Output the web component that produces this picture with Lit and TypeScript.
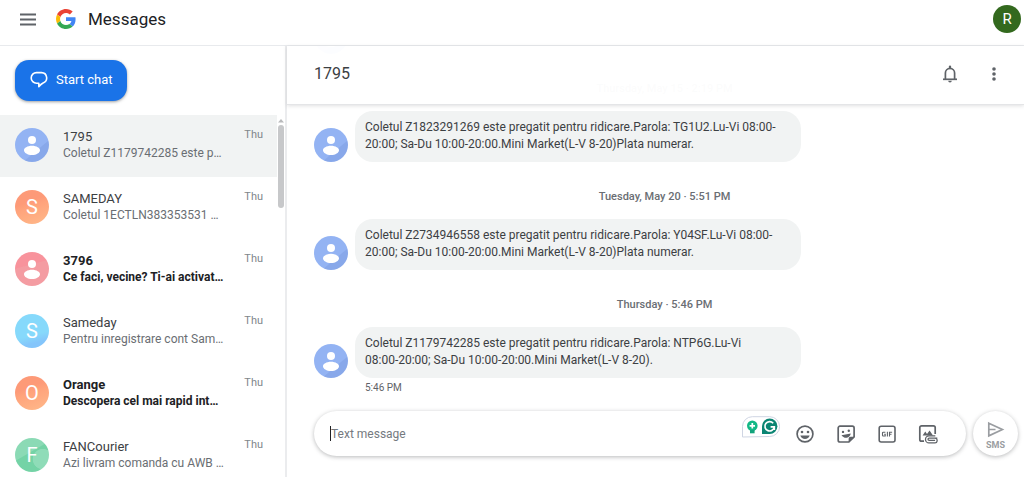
import { LitElement, html, css, svg, nothing } from "lit";
import { customElement, property } from "lit/decorators.js";

interface Chat {
  name: string;
  preview: string;
  tone: string;
  letter?: string;
  unread?: boolean;
  active?: boolean;
}

interface Message {
  stamp: string;
  text: string;
}

const CHATS: Chat[] = [
  { name: "1795", preview: "Coletul Z1179742285 este p…", tone: "blue", active: true },
  { name: "SAMEDAY", preview: "Coletul 1ECTLN383353531 …", tone: "orange", letter: "S" },
  { name: "3796", preview: "Ce faci, vecine? Ti-ai activat…", tone: "pink", unread: true },
  { name: "Sameday", preview: "Pentru inregistrare cont Sam…", tone: "cyan", letter: "S" },
  { name: "Orange", preview: "Descopera cel mai rapid int…", tone: "orange", letter: "O", unread: true },
  { name: "FANCourier", preview: "Azi livram comanda cu AWB …", tone: "green", letter: "F" },
];

const MESSAGES: Message[] = [
  {
    stamp: "Thursday, May 15 · 2:19 PM",
    text: "Coletul Z1823291269 este pregatit pentru ridicare.Parola: TG1U2.Lu-Vi 08:00-20:00; Sa-Du 10:00-20:00.Mini Market(L-V 8-20)Plata numerar.",
  },
  {
    stamp: "Tuesday, May 20 · 5:51 PM",
    text: "Coletul Z2734946558 este pregatit pentru ridicare.Parola: Y04SF.Lu-Vi 08:00-20:00; Sa-Du 10:00-20:00.Mini Market(L-V 8-20)Plata numerar.",
  },
  {
    stamp: "Thursday · 5:46 PM",
    text: "Coletul Z1179742285 este pregatit pentru ridicare.Parola: NTP6G.Lu-Vi\n08:00-20:00; Sa-Du 10:00-20:00.Mini Market(L-V 8-20).",
  },
];

@customElement("contact-avatar")
export class ContactAvatar extends LitElement {
  @property() tone = "blue";
  @property() letter = "";

  static styles = css`
    :host {
      display: block;
      flex: none;
      width: 34px;
      height: 34px;
    }
    .disc {
      display: grid;
      place-items: center;
      height: 100%;
      border-radius: 50%;
      overflow: hidden;
      color: #fff;
      font: 20px/34px Roboto, sans-serif;
    }
    .blue {
      background: linear-gradient(140deg, #93b3f3 0 64%, #88a8ea 66%);
    }
    .orange {
      background: linear-gradient(160deg, #fd9a78 0 35%, #ffa47c 50%, #ffb587 90%);
    }
    .pink {
      background: linear-gradient(165deg, #f8939c 0 38%, #f49ca2 40%);
    }
    .cyan {
      background: linear-gradient(165deg, #86d9fb 0 60%, #84c5fb 80%);
    }
    .green {
      background: radial-gradient(circle at 82% 62%, #8fdcb8 0 28%, transparent 30%),
        linear-gradient(150deg, #8bdab5 0 42%, #74d3a6 44%);
    }
    svg {
      display: block;
      width: 34px;
      height: 34px;
    }
  `;

  render() {
    return html`<div class="disc ${this.tone}">
      ${this.letter
        ? this.letter
        : html`<svg viewBox="0 0 34 34" fill="#fff" aria-hidden="true">
            <circle cx="17" cy="12" r="4" />
            <path d="M17 17.8c4.6 0 8 2.200 8 4.400 0 2.600-3.600 4.800-8 4.800s-8-2.200-8-4.800c0-2.200 3.400-4.400 8-4.400z" />
          </svg>`}
    </div>`;
  }
}

const menuIcon = svg`<path d="M0 1.500h16M0 6.500h16M0 11.500h16" stroke="#5f6368" stroke-width="2"/>`;

@customElement("app-root")
export class AppRoot extends LitElement {
  static styles = css`
    :host {
      display: grid;
      grid-template-rows: 45px minmax(0, 1fr);
      height: 100vh;
      background: #fff;
      color: #202124;
      font-family: Roboto, sans-serif;
      font-size: 12px;
    }
    * {
      box-sizing: border-box;
    }
    button {
      border: 0;
      padding: 0;
      background: none;
      font: inherit;
      color: inherit;
      cursor: pointer;
    }
    svg {
      display: block;
      flex: none;
    }
    h1,
    h2,
    p,
    ul {
      margin: 0;
      padding: 0;
      font-weight: 400;
    }
    .topbar {
      display: flex;
      align-items: center;
      padding: 0 3px 7px 20px;
    }
    .logo {
      margin: 0 12px 0 20px;
    }
    .brand {
      flex: 1;
      font-size: 17px;
      line-height: 24px;
    }
    .account {
      width: 28px;
      height: 28px;
      border-radius: 50%;
      background: #33691e;
      color: #fff;
      font-size: 15px;
    }
    .body {
      display: grid;
      grid-template-columns: 287px minmax(0, 1fr);
      border-top: 1px solid #e8eaed;
      min-height: 0;
    }
    .side {
      display: flex;
      flex-direction: column;
      min-height: 0;
      border-right: 2px solid #ebecee;
    }
    .start {
      display: flex;
      align-items: center;
      align-self: flex-start;
      gap: 8px;
      height: 41px;
      margin: 14px 0 14px 15px;
      padding: 0 14px 2px 15px;
      border-radius: 14px;
      background: #1a73e8;
      color: #fff;
      font-size: 13px;
      box-shadow: 0 1px 3px rgba(60, 64, 67, 0.5);
    }
    .list-wrap {
      display: flex;
      flex: 1;
      min-height: 0;
      overflow: hidden;
    }
    .list {
      flex: 1;
      min-width: 0;
      list-style: none;
    }
    .chat {
      display: flex;
      gap: 14px;
      height: 62px;
      padding: 13px 14px 0 15px;
      color: inherit;
      text-decoration: none;
    }
    .chat.active {
      background: #f1f3f3;
    }
    .info {
      flex: 1;
      min-width: 0;
      line-height: 17px;
    }
    .name {
      font-size: 13px;
      color: #3c4043;
    }
    .preview {
      font-size: 12px;
      color: #6a6e73;
      white-space: nowrap;
    }
    .unread .name,
    .unread .preview {
      font-weight: 700;
      color: #202124;
    }
    .when {
      font-size: 11px;
      line-height: 14px;
      color: #80868b;
    }
    .rail {
      display: flex;
      flex-direction: column;
      align-items: center;
      width: 8px;
      padding-top: 4px;
    }
    .thumb {
      width: 6px;
      height: 83px;
      margin: 2px 0 auto;
      border-radius: 3px;
      background: #c7c8ca;
    }
    .pane {
      position: relative;
      display: flex;
      flex-direction: column;
      min-width: 0;
      min-height: 0;
    }
    .pane-head {
      position: absolute;
      inset: 0 0 auto;
      display: flex;
      align-items: center;
      gap: 28px;
      height: 59px;
      padding: 0 22px 2px 27px;
      background: rgba(255, 255, 255, 0.975);
      border-bottom: 1px solid #e4e5e7;
      box-shadow: 0 1px 4px rgba(60, 64, 67, 0.16);
    }
    .title {
      flex: 1;
      font-size: 16px;
      line-height: 24px;
      color: #3c4043;
    }
    .thread {
      display: flex;
      flex: 1;
      flex-direction: column;
      justify-content: flex-end;
      min-height: 0;
      overflow: hidden;
      padding: 0 9px 16px 27px;
    }
    .stamp {
      flex: none;
      line-height: 14px;
      margin: 28px 0 15px;
      text-align: center;
      font-size: 11px;
      font-weight: 500;
      color: #6a6e73;
    }
    .row {
      display: flex;
      flex: none;
      align-items: flex-end;
      gap: 7px;
    }
    .bubble {
      width: 446px;
      max-width: 80%;
      padding: 8px 10px 9px;
      border-radius: 18px;
      background: #f1f3f3;
      color: #3c4043;
      font-size: 12px;
      line-height: 17px;
      white-space: pre-line;
    }
    .time {
      padding: 3px 0 0 51px;
      font-size: 10px;
      line-height: 14px;
      color: #5f6368;
    }
    .compose {
      display: flex;
      gap: 7px;
      padding: 0 6px 21px 27px;
    }
    .field {
      display: flex;
      flex: 1;
      align-items: center;
      height: 45px;
      min-width: 0;
      padding: 0 28px 0 16px;
      border-radius: 23px;
      box-shadow: 0 1px 4px rgba(60, 64, 67, 0.36);
    }
    .caret {
      width: 1px;
      height: 15px;
      background: #202124;
    }
    .text {
      flex: 1;
      min-width: 0;
      padding: 0;
      border: 0;
      outline: 0;
      background: none;
      font: 12px/18px Roboto, sans-serif;
      color: #202124;
    }
    .text::placeholder {
      color: #757a7f;
      opacity: 1;
    }
    .helper {
      align-self: flex-start;
      margin: 5px 15px 0 0;
    }
    .tools {
      display: flex;
      gap: 21px;
    }
    .send {
      display: flex;
      flex-direction: column;
      align-items: center;
      width: 45px;
      height: 45px;
      padding-top: 10px;
      border-radius: 50%;
      color: #9a9da1;
      font-size: 9px;
      font-weight: 700;
      line-height: 14px;
      box-shadow: 0 1px 4px rgba(60, 64, 67, 0.36);
    }
  `;

  private renderChat(chat: Chat) {
    return html`<li>
      <a href="#" class="chat ${chat.active ? "active" : ""} ${chat.unread ? "unread" : ""}">
        <contact-avatar .tone=${chat.tone} .letter=${chat.letter ?? ""}></contact-avatar>
        <div class="info">
          <div class="name">${chat.name}</div>
          <div class="preview">${chat.preview}</div>
        </div>
        <span class="when">Thu</span>
      </a>
    </li>`;
  }

  private renderMessage(message: Message, last: boolean) {
    return html`<div class="stamp">${message.stamp}</div>
      <div class="row">
        <contact-avatar></contact-avatar>
        <p class="bubble">${message.text}</p>
      </div>
      ${last ? html`<div class="time">5:46 PM</div>` : nothing}`;
  }

  render() {
    return html`
      <header class="topbar">
        <button aria-label="Menu">
          <svg width="16" height="13" viewBox="0 0 16 13">${menuIcon}</svg>
        </button>
        <svg class="logo" width="20" height="20" viewBox="0 0 48 48" aria-hidden="true">
          <path fill="#ea4335" d="M24 9.500c3.540 0 6.710 1.220 9.210 3.600l6.850-6.850C35.900 2.380 30.470 0 24 0 14.620 0 6.510 5.380 2.560 13.220l7.980 6.190C12.430 13.720 17.740 9.500 24 9.500z" />
          <path fill="#4285f4" d="M46.980 24.550c0-1.570-.15-3.090-.38-4.550H24v9.020h12.940c-.58 2.960-2.260 5.480-4.780 7.180l7.730 6c4.510-4.180 7.090-10.360 7.090-17.650z" />
          <path fill="#fbbc05" d="M10.530 28.590c-.48-1.450-.76-2.990-.76-4.590s.27-3.140.76-4.590l-7.980-6.190C.92 16.460 0 20.120 0 24c0 3.880.92 7.540 2.560 10.780l7.970-6.190z" />
          <path fill="#34a853" d="M24 48c6.480 0 11.930-2.130 15.890-5.810l-7.730-6c-2.150 1.450-4.920 2.300-8.160 2.300-6.260 0-11.570-4.220-13.470-9.910l-7.980 6.190C6.510 42.620 14.620 48 24 48z" />
        </svg>
        <h1 class="brand">Messages</h1>
        <button class="account" aria-label="Account">R</button>
      </header>
      <div class="body">
        <aside class="side">
          <button class="start">
            <svg width="18" height="17" viewBox="0 0 18 17" fill="none" stroke="#fff" stroke-width="1.600" stroke-linejoin="round" aria-hidden="true">
              <path d="M8.800 12.200H6.500a5.300 5.300 0 0 1 0-10.600h5a5.300 5.300 0 0 1 1.600 10.300Q11.500 12.600 8.800 15.600z" />
            </svg>
            Start chat
          </button>
          <div class="list-wrap">
            <ul class="list">
              ${CHATS.map((chat) => this.renderChat(chat))}
            </ul>
            <div class="rail" aria-hidden="true">
              <svg width="6" height="4" viewBox="0 0 6 4"><path d="M3 0l3 3.500H0z" fill="#b9babc" /></svg>
              <div class="thumb"></div>
            </div>
          </div>
        </aside>
        <main class="pane">
          <div class="thread">
            <div class="row"><contact-avatar></contact-avatar></div>
            ${MESSAGES.map((m, i) => this.renderMessage(m, i === MESSAGES.length - 1))}
          </div>
          <div class="pane-head">
            <h2 class="title">1795</h2>
            <button aria-label="Notifications">
              <svg width="16" height="18" viewBox="0 0 16 18" fill="none" stroke="#5f6368" stroke-width="1.700">
                <path d="M1 14.300h14" />
                <path d="M3.400 14V8a4.600 4.600 0 0 1 9.200 0v6" />
                <path d="M8 1.600v1.600" stroke-width="2.200" stroke-linecap="round" />
                <path d="M6.200 15.700h3.600a1.800 1.800 0 0 1-3.600 0z" fill="#5f6368" stroke="none" />
              </svg>
            </button>
            <button aria-label="More options">
              <svg width="16" height="16" viewBox="0 0 16 16" fill="#5f6368">
                <circle cx="8" cy="3" r="1.800" /><circle cx="8" cy="8" r="1.800" /><circle cx="8" cy="13" r="1.800" />
              </svg>
            </button>
          </div>
          <form class="compose" @submit=${(e: Event) => e.preventDefault()}>
            <div class="field">
              <span class="caret"></span>
              <input class="text" type="text" aria-label="Text message" placeholder="Text message" />
              <svg class="helper" width="38" height="22" viewBox="0 0 38 22" aria-hidden="true">
                <path d="M.5 21V10.500a9.800 9.800 0 0 1 9.800-9.800h17.400a9.900 9.900 0 0 1 0 19.800z" fill="#fff" stroke="#cfd5e3" />
                <circle cx="10.300" cy="9.800" r="5.300" fill="#12b886" />
                <path d="M8 14h4.600v3.300H8z" fill="#12a37c" />
                <path d="M7.600 9.800h5.400M10.300 7.100v5.400" stroke="#fff" stroke-width="1.700" />
                <path d="M20 18V10.300a7.700 7.700 0 1 1 7.700 7.700z" fill="#0b8573" />
                <path d="M31.200 7.200A4.700 4.700 0 1 0 32.300 10.800H28.600M32.300 10.800V14" fill="none" stroke="#fff" stroke-width="1.700" />
              </svg>
              <div class="tools">
                <button type="button" aria-label="Emoji">
                  <svg width="20" height="20" viewBox="0 0 20 20" fill="#5f6368">
                    <circle cx="10" cy="10" r="7.900" fill="none" stroke="#5f6368" stroke-width="1.700" />
                    <circle cx="7" cy="8" r="1.300" /><circle cx="13" cy="8" r="1.300" />
                    <path d="M5.300 11.500h9.400c-.7 2.200-2.500 3.500-4.700 3.500s-4-1.300-4.700-3.500z" />
                  </svg>
                </button>
                <button type="button" aria-label="Stickers">
                  <svg width="20" height="20" viewBox="0 0 20 20" fill="#5f6368">
                    <path d="M4 2.200h12.300a1.800 1.800 0 0 1 1.800 1.800v9l-5.200 5H4A1.800 1.800 0 0 1 2.200 16.200V4A1.800 1.800 0 0 1 4 2.200z" fill="none" stroke="#5f6368" stroke-width="1.700" />
                    <path d="M12.600 18.200v-3.400a2 2 0 0 1 2-2h3.600z" />
                    <circle cx="7" cy="7.900" r="1.200" /><circle cx="12.800" cy="6.700" r="1.200" />
                    <path d="M5.500 11.200l9.200-1.700c-.2 2.200-1.700 3.900-3.900 4.200-2.100.3-4.200-.7-5.300-2.500z" />
                  </svg>
                </button>
                <button type="button" aria-label="GIF">
                  <svg width="20" height="20" viewBox="0 0 20 20" fill="none" stroke="#5f6368">
                    <rect x="2.200" y="2.200" width="15.800" height="15.800" rx="2" stroke-width="1.600" />
                    <path d="M8.400 8.200H6.200a.7.700 0 0 0-.7.700v2.400c0 .4.300.7.700.7h2V10.300H7.200M10.400 7.700V12.500M12.500 12.500V8.200h2.600M12.500 10.300h2" stroke-width="1.100" />
                  </svg>
                </button>
                <button type="button" aria-label="Attach">
                  <svg width="20" height="20" viewBox="0 0 20 20" fill="none" stroke="#5f6368" stroke-width="1.700">
                    <path d="M6 17.200H3.600A1.800 1.800 0 0 1 1.800 15.400V3.600A1.800 1.800 0 0 1 3.600 1.800h11.800a1.800 1.800 0 0 1 1.800 1.800V10" />
                    <path d="M4.600 11.500l2.700-4 1.700 2.400 2.600-3.500 3.400 5.100z" fill="#5f6368" stroke="none" />
                    <path d="M19.300 14.200h-8.200a1.100 1.100 0 0 0 0 2.200h6M17.300 11.900H11a3.500 3.500 0 0 0 0 7h5.500a2.300 2.300 0 0 0 .6-4.700" stroke-width="1.300" />
                  </svg>
                </button>
              </div>
            </div>
            <button class="send" aria-label="Send SMS">
              <svg width="18" height="17" viewBox="0 0 18 17" fill="none" stroke="#9a9da1" stroke-width="1.700">
                <path d="M1.800 2.200l13.600 6.300-13.600 6.300zM2 8.500h6.500" />
              </svg>
              <span>SMS</span>
            </button>
          </form>
        </main>
      </div>
    `;
  }
}
